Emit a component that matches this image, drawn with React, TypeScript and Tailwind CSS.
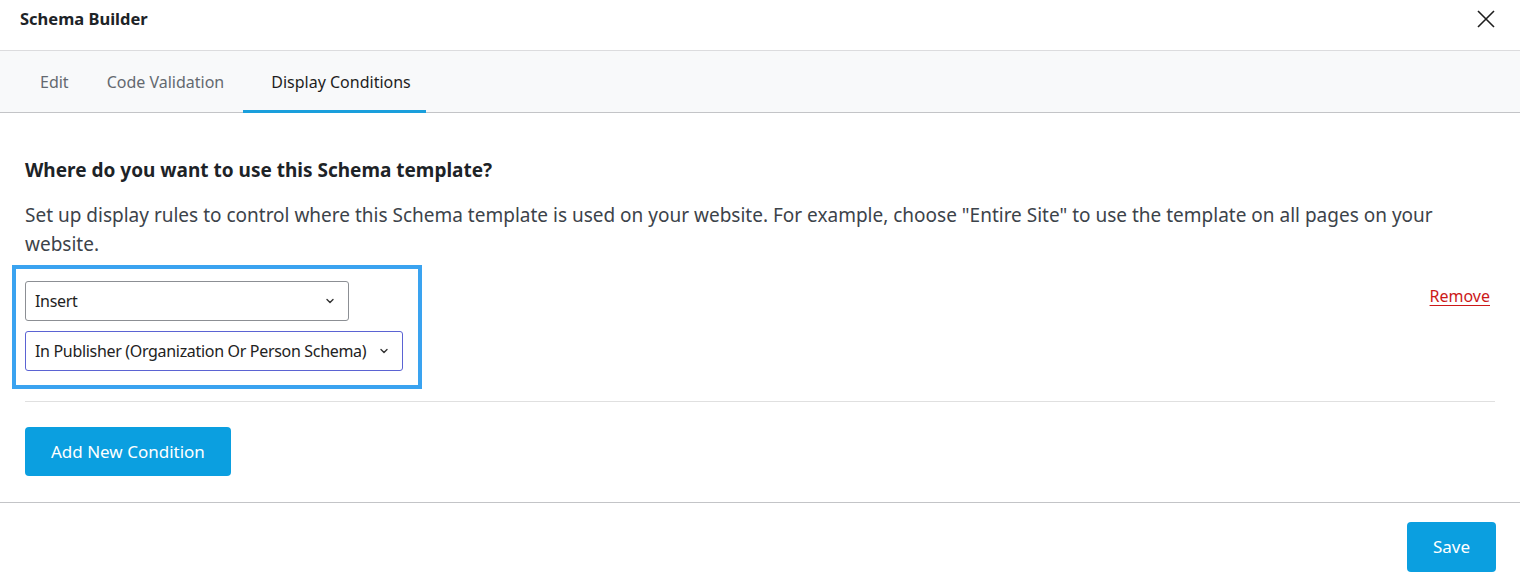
import { useState } from 'react';

const tabs = ['Edit', 'Code Validation', 'Display Conditions'];

function Chevron() {
  return (
    <svg width="12" height="12" viewBox="0 0 12 12" fill="none" className="shrink-0">
      <path d="M3 4.5l3 3 3-3" stroke="#333" strokeWidth="1.4" strokeLinecap="round" strokeLinejoin="round" />
    </svg>
  );
}

function Select({ value, focused, width }: { value: string; focused?: boolean; width: string }) {
  return (
    <div
      className={`flex h-[40px] items-center justify-between gap-2 whitespace-nowrap rounded-[3px] border bg-white pl-[9px] pr-[12px] text-[16px] tracking-[-0.02em] text-[#222] ${width} ${
        focused ? 'border-[#5b63d3]' : 'border-[#8c8f94]'
      }`}
    >
      <span>{value}</span>
      <Chevron />
    </div>
  );
}

export default function App() {
  const [active, setActive] = useState(2);

  return (
    <div className="flex h-[586px] w-full flex-col bg-white font-['Noto_Sans',sans-serif] text-[#1e1e1e]">
      {/* header */}
      <div className="flex h-[51px] shrink-0 items-center justify-between border-b border-[#dcdcde] pb-[12px] pl-[20px] pr-[24px]">
        <h1 className="text-[16.5px] font-bold text-[#1d2327]">Schema Builder</h1>
        <button className="text-[#1e1e1e]">
          <svg width="20" height="20" viewBox="0 0 20 20" fill="none">
            <path d="M2 2l16 16M18 2L2 18" stroke="currentColor" strokeWidth="1.6" />
          </svg>
        </button>
      </div>

      {/* tabs */}
      <div className="flex h-[62px] shrink-0 border-b border-[#c3c4c7] bg-[#f8f9fa] pl-[21px]">
        {tabs.map((t, i) => (
          <button
            key={t}
            onClick={() => setActive(i)}
            className={`-mb-px flex items-center border-b-[3px] pt-[2px] text-[16px] ${
              i === active
                ? 'border-[#1a9fdc] pl-[28px] pr-[15px] text-[#1e1e1e]'
                : 'border-transparent px-[19px] text-[#646970]'
            }`}
          >
            {t}
          </button>
        ))}
      </div>

      {/* body */}
      <div className="flex flex-1 flex-col px-[25px] pt-[44px]">
        <h2 className="text-[19px] font-bold leading-[26px] text-[#1d2327]">
          Where do you want to use this Schema template?
        </h2>
        <p className="mt-[18px] text-[19px] leading-[29px] text-[#3c434a]">
          Set up display rules to control where this Schema template is used on your website. For example, choose "Entire
          Site" to use the template on all pages on your website.
        </p>

        <div className="mt-[6px] flex items-start justify-between">
          <div className="-ml-[13px] flex flex-col gap-[10px] border-4 border-[#3aa3f0] pb-[14px] pl-[9px] pr-[15px] pt-[12px]">
            <Select value="Insert" width="w-[324px]" />
            <Select value="In Publisher (Organization Or Person Schema)" width="w-[378px]" focused />
          </div>
          <a href="#" className="mr-[5px] mt-[19px] text-[16px] text-[#cc1818] underline underline-offset-[3px]">
            Remove
          </a>
        </div>

        <div className="mt-[12px] border-t border-[#e0e0e0]" />

        <div className="pt-[25px]">
          <button className="h-[49px] rounded-[4px] bg-[#0b9fe0] px-[26px] text-[17px] text-white">
            Add New Condition
          </button>
        </div>
      </div>

      {/* footer */}
      <div className="flex h-[84px] shrink-0 items-start justify-end border-t border-[#c3c4c7] pr-[24px] pt-[19px]">
        <button className="h-[50px] w-[89px] rounded-[4px] bg-[#0b9fe0] text-[17px] text-white">Save</button>
      </div>
    </div>
  );
}
